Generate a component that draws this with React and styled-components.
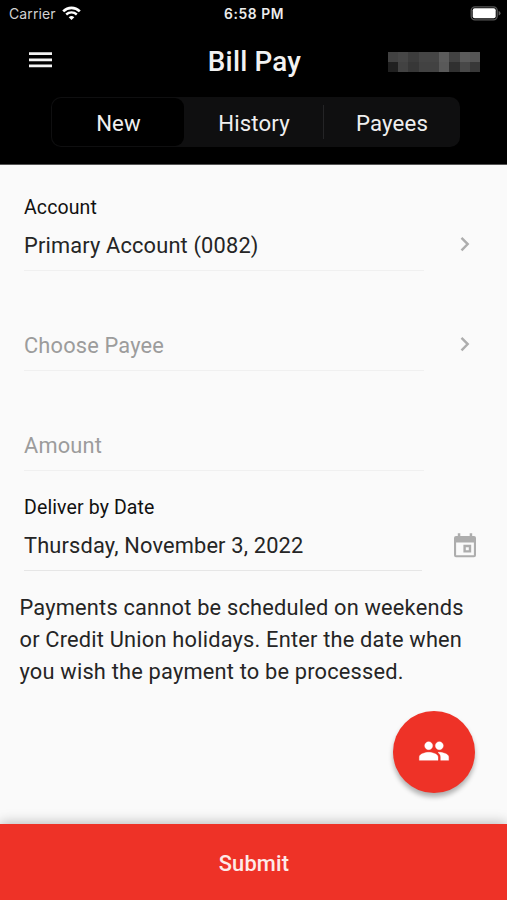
import React from "react";
import styled, { createGlobalStyle } from "styled-components";

const GlobalStyle = createGlobalStyle`
  * {
    box-sizing: border-box;
  }
  body {
    margin: 0;
    background: #fafafa;
    font-family: Roboto, "Liberation Sans", sans-serif;
  }
  button {
    font-family: inherit;
    border: none;
    padding: 0;
  }
`;

const Screen = styled.div`
  position: relative;
  display: flex;
  flex-direction: column;
  width: 507px;
  height: 900px;
  overflow: hidden;
  background: #fafafa;
`;

const Header = styled.header`
  height: 165px;
  background: #000;
  border-bottom: 1px solid #555;
  color: #fff;
`;

const StatusBar = styled.div`
  display: grid;
  grid-template-columns: 1fr auto 1fr;
  align-items: center;
  height: 27px;
  padding: 0 6px 0 9px;
  font-family: Inter, "Liberation Sans", sans-serif;
  font-size: 14px;
`;

const Carrier = styled.div`
  display: flex;
  align-items: center;
  gap: 6px;
  color: #d2d2d2;
  letter-spacing: 0.1px;
`;

const Time = styled.div`
  margin-left: -2px;
  font-size: 13.8px;
  font-weight: 600;
  letter-spacing: 0.6px;
  color: #ececec;
`;

const Battery = styled.svg`
  justify-self: end;
`;

const TitleBar = styled.div`
  display: grid;
  grid-template-columns: 1fr auto 1fr;
  align-items: center;
  height: 70px;
  padding: 0 27px 0 29px;
`;

const MenuButton = styled.button`
  display: flex;
  width: 23px;
  height: 16px;
  margin-top: -5px;
  background: none;
  color: #f4f4f4;
`;

const Title = styled.h1`
  margin: 0;
  font-size: 27.8px;
  line-height: 32px;
  font-weight: 500;
  letter-spacing: 0.2px;
  color: #f2f2f2;
`;

const HiddenName = styled.div`
  display: grid;
  justify-self: end;
  grid-template-columns: repeat(9, 1fr);
  width: 92px;
  height: 20px;
`;

const Pixel = styled.span`
  background: ${props => props.$shade};
`;

const Tabs = styled.nav`
  display: grid;
  grid-template-columns: 132px 1fr 136px;
  width: 409px;
  height: 50px;
  margin: 0 0 0 51px;
  padding: 1px;
  border-radius: 10px;
  background: #0f0f10;
`;

const Tab = styled.button`
  display: flex;
  align-items: center;
  justify-content: center;
  border-radius: 9px;
  background: ${props => (props.$active ? "#000" : "transparent")};
  color: #efefef;
  font-size: 22.2px;
  letter-spacing: 0.15px;
  padding: 1px 0 0 1px;
`;

const DividedTab = styled(Tab)`
  border-radius: 0;
  border-left: 1px solid transparent;
  border-image: linear-gradient(
      transparent 16%,
      #242426 16%,
      #242426 84%,
      transparent 84%
    )
    1;
`;

const Form = styled.form`
  flex: 1;
  padding: 6px 24px 0;
`;

const Field = styled.div`
  display: flex;
  justify-content: space-between;
  height: 100px;
`;

const FieldText = styled.div`
  display: flex;
  flex-direction: column;
  justify-content: flex-end;
  width: ${props => props.$width || 400}px;
  border-bottom: 1px solid ${props => props.$line || "#f0f0f0"};
`;

const Label = styled.label`
  margin-bottom: 11px;
  font-size: 19.5px;
  line-height: 24px;
  letter-spacing: 0.12px;
  color: #111;
`;

const Value = styled.div`
  padding-bottom: 9px;
  font-size: 21.8px;
  line-height: 30px;
  letter-spacing: 0.17px;
  color: ${props => (props.$empty ? "#9c9c9c" : "#252525")};
`;

const FieldIcon = styled.div`
  display: flex;
  align-items: flex-end;
  justify-content: center;
  width: 36px;
  padding-bottom: ${props => props.$bottom}px;
`;

const Note = styled.p`
  margin: 21px -10px 0 -4.5px;
  font-size: 21.8px;
  line-height: 32px;
  letter-spacing: 0.2px;
  color: #252525;
`;

const PayeesButton = styled.button`
  position: absolute;
  right: 32px;
  bottom: 107px;
  display: flex;
  align-items: center;
  justify-content: center;
  width: 82px;
  height: 82px;
  border-radius: 50%;
  background: #ee3227;
  color: #fff;
  padding-bottom: 3px;
  box-shadow: 0 4px 5px rgba(0, 0, 0, 0.3);
`;

const Submit = styled.button`
  height: 76px;
  background: #ee3227;
  box-shadow: 0 -1px 12px rgba(0, 0, 0, 0.28);
  color: #fdeae8;
  font-size: 21.8px;
  font-weight: 500;
  letter-spacing: 0.2px;
  padding: 2px 0 0 1px;
`;

const shades = [
  "#414141", "#464646", "#3c3c3c", "#454545", "#454545", "#5c5c5c", "#424242", "#5b5b5b", "#555555",
  "#202020", "#424242", "#373737", "#424242", "#424242", "#595959", "#303030", "#484848", "#383838"
];

const WifiIcon = () => (
  <svg width="19" height="15" viewBox="0 0 19 15" fill="none" stroke="#fff">
    <path d="M1.2 5.4C5.9.8 13.1.8 17.8 5.4" strokeWidth="2.7" />
    <path d="M4.2 8.5C7.2 5.7 11.8 5.7 14.8 8.5" strokeWidth="2.4" />
    <path d="M6.7 11.2Q9.5 8.7 12.3 11.2L9.5 14Z" fill="#fff" stroke="none" />
  </svg>
);

const MenuIcon = () => (
  <svg width="23" height="16" viewBox="0 0 23 16" fill="currentColor">
    <path d="M0 .2H23V2.9H0ZM0 6.5H23V9.2H0ZM0 12.6H23V15.3H0Z" />
  </svg>
);

const ChevronIcon = () => (
  <svg width="10" height="16" viewBox="0 0 10 16" fill="none" stroke="#adadad" strokeWidth="2.4">
    <path d="M1.5 1.9L7.7 8.1L1.5 14.3" />
  </svg>
);

const CalendarIcon = () => (
  <svg width="22" height="26" viewBox="0 0 22 26" fill="#adadad">
    <path d="M3.8 1.2H6.3V4H15.7V1.2H18.2V4H20Q22 4 22 6V23.2Q22 25.2 20 25.2H2Q0 25.2 0 23.2V6Q0 4 2 4H3.8ZM2.1 10.4V23.2H19.9V10.4Z" fillRule="evenodd" />
    <path d="M9.4 12.8H17.2V20.6H9.4ZM11.8 15.2V18.2H14.8V15.2Z" fillRule="evenodd" />
  </svg>
);

const PeopleIcon = () => (
  <svg width="32" height="32" viewBox="0 0 24 24" fill="currentColor" stroke="currentColor" strokeWidth=".25">
    <path d="M16 11c1.66 0 2.99-1.34 2.99-3S17.66 5 16 5s-3 1.34-3 3 1.34 3 3 3zm-8 0c1.66 0 2.99-1.34 2.99-3S9.66 5 8 5 5 6.34 5 8s1.34 3 3 3zm0 2c-2.33 0-7 1.17-7 3.5V19h14v-2.5C15 14.17 10.33 13 8 13zm8 0c-.29 0-.62.02-.97.05 1.16.84 1.97 1.97 1.97 3.45V19h6v-2.5c0-2.33-4.67-3.5-7-3.5z" />
  </svg>
);

const App = () => (
  <>
    <GlobalStyle />
    <Screen>
      <Header>
        <StatusBar>
          <Carrier>
            Carrier
            <WifiIcon />
          </Carrier>
          <Time>6:58 PM</Time>
          <Battery width="31" height="15" viewBox="0 0 31 15">
            <rect x="1.2" y=".8" width="26" height="13" rx="3.8" fill="#000" stroke="#575757" strokeWidth="1.3" />
            <rect x="2.7" y="2.3" width="23" height="10" rx="2" fill="#fff" />
            <path d="M28.6 5Q30.5 5.5 30.5 7.3T28.6 9.6Z" fill="#606060" />
          </Battery>
        </StatusBar>
        <TitleBar>
          <MenuButton aria-label="Menu">
            <MenuIcon />
          </MenuButton>
          <Title>Bill Pay</Title>
          <HiddenName>
            {shades.map((shade, i) => (
              <Pixel key={i} $shade={shade} />
            ))}
          </HiddenName>
        </TitleBar>
        <Tabs>
          <Tab $active>New</Tab>
          <Tab>History</Tab>
          <DividedTab>Payees</DividedTab>
        </Tabs>
      </Header>
      <Form>
        <Field>
          <FieldText>
            <Label>Account</Label>
            <Value>Primary Account (0082)</Value>
          </FieldText>
          <FieldIcon $bottom={19}>
            <ChevronIcon />
          </FieldIcon>
        </Field>
        <Field>
          <FieldText>
            <Value $empty>Choose Payee</Value>
          </FieldText>
          <FieldIcon $bottom={19}>
            <ChevronIcon />
          </FieldIcon>
        </Field>
        <Field>
          <FieldText>
            <Value $empty>Amount</Value>
          </FieldText>
        </Field>
        <Field>
          <FieldText $width={398} $line="#e6e6e6">
            <Label>Deliver by Date</Label>
            <Value>Thursday, November 3, 2022</Value>
          </FieldText>
          <FieldIcon $bottom={13}>
            <CalendarIcon />
          </FieldIcon>
        </Field>
        <Note>
          Payments cannot be scheduled on weekends
          <br />
          or Credit Union holidays. Enter the date when
          <br />
          you wish the payment to be processed.
        </Note>
      </Form>
      <Submit>Submit</Submit>
      <PayeesButton aria-label="Payees">
        <PeopleIcon />
      </PayeesButton>
    </Screen>
  </>
);

export default App;
